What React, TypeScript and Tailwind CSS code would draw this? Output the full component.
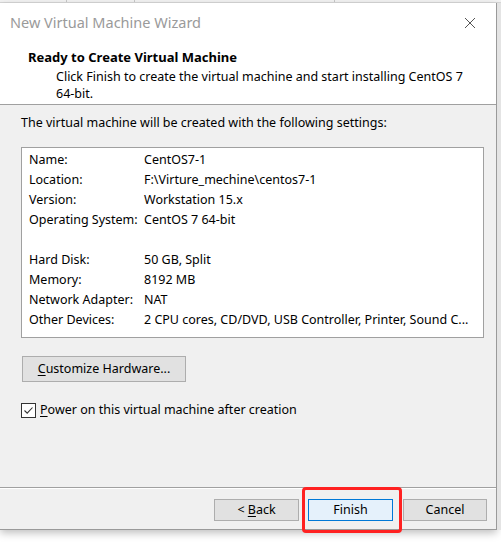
import React from "react";

const rows: [string, string][] = [
  ["Name:", "CentOS7-1"],
  ["Location:", "F:\\Virture_mechine\\centos7-1"],
  ["Version:", "Workstation 15.x"],
  ["Operating System:", "CentOS 7 64-bit"],
  ["", ""],
  ["Hard Disk:", "50 GB, Split"],
  ["Memory:", "8192 MB"],
  ["Network Adapter:", "NAT"],
  ["Other Devices:", "2 CPU cores, CD/DVD, USB Controller, Printer, Sound C..."],
];

export default function App() {
  return (
    <div
      className="w-[501px] h-[545px] bg-white flex flex-col overflow-hidden text-[12.5px] text-black"
      style={{ fontFamily: '"Noto Sans", "Open Sans", sans-serif' }}
    >
      <div className="h-[3px] bg-[#f3f3f3] border-b border-[#d8d8d8] flex">
        <div className="w-[67px] border-r border-[#c8c8c8]" />
        <div className="w-[68px] border-r border-[#c8c8c8]" />
        <div className="w-[200px] border-r border-[#c8c8c8]" />
      </div>
      <div className="flex">
        <div className="w-[497px] h-[527px] flex flex-col border-r border-b border-[#9a9a9a] bg-white shadow-[0_3px_8px_rgba(0,0,0,0.25)]">
          {/* title bar */}
          <div className="h-[38px] flex items-center justify-between pl-[10px] pr-[20px] pt-[1px]">
            <span className="text-[14.5px] text-[#9a9a9a]">New Virtual Machine Wizard</span>
            <svg width="12" height="12" viewBox="0 0 12 12">
              <path d="M1 1 L11 11 M11 1 L1 11" stroke="#555" strokeWidth="1" />
            </svg>
          </div>
          {/* header */}
          <div className="h-[64px] border-b border-[#a0a0a0] pt-[7px]">
            <div className="pl-[28px] font-bold text-[13px] leading-[18px] mb-[2px]">Ready to Create Virtual Machine</div>
            <div className="pl-[56px] pr-[30px] leading-[17px]">
              Click Finish to create the virtual machine and start installing CentOS 7 64-bit.
            </div>
          </div>
          {/* body */}
          <div className="flex-1 bg-[#f0f0f0] flex flex-col px-[21px] pr-[12px]">
            <div className="mt-[9px] leading-[18px]">The virtual machine will be created with the following settings:</div>
            <div className="mt-[15px] h-[191px] bg-white border border-[#a0a0a0] pt-[2px] pl-[7px]">
              {rows.map(([k, v], i) => (
                <div key={i} className="flex h-[20px] items-center whitespace-nowrap">
                  <span className="w-[115px]">{k}</span>
                  <span>{v}</span>
                </div>
              ))}
            </div>
            <button className="mt-[18px] ml-[1px] w-[164px] h-[26px] bg-[#e1e1e1] border border-[#adadad] text-center">
              <span className="underline underline-offset-2">C</span>ustomize Hardware...
            </button>
            <div className="mt-[19px] flex items-center">
              <div className="w-[15px] h-[15px] border border-[#333] bg-white flex items-center justify-center">
                <svg width="11" height="11" viewBox="0 0 11 11">
                  <path d="M1.5 5.5 L4.2 8.2 L9.5 2.5" stroke="#333" strokeWidth="1.1" fill="none" />
                </svg>
              </div>
              <span className="ml-[4px]">
                <span className="underline underline-offset-2">P</span>ower on this virtual machine after creation
              </span>
            </div>
          </div>
          {/* footer */}
          <div className="h-[42px] bg-[#f0f0f0] border-t border-[#a0a0a0] flex flex-col">
            <div className="h-px bg-white" />
            <div className="flex justify-end pr-[9px] mt-[10px]">
              <button className="w-[85px] h-[22px] bg-[#e1e1e1] border border-[#adadad]">
                &lt; <span className="underline underline-offset-2">B</span>ack
              </button>
              <div className="relative ml-[9px]">
                <button className="w-[85px] h-[22px] bg-[#e5f1fb] border border-[#0078d7]">Finish</button>
                <div className="absolute left-[-6px] top-[-12px] w-[100px] h-[46px] border-[3px] border-[#ff2121] rounded-[4px]" />
              </div>
              <button className="ml-[10px] w-[84px] h-[22px] bg-[#e1e1e1] border border-[#adadad]">Cancel</button>
            </div>
          </div>
        </div>
        <div className="w-[4px] h-[527px] bg-[#e4e4e4]" />
      </div>
    </div>
  );
}
